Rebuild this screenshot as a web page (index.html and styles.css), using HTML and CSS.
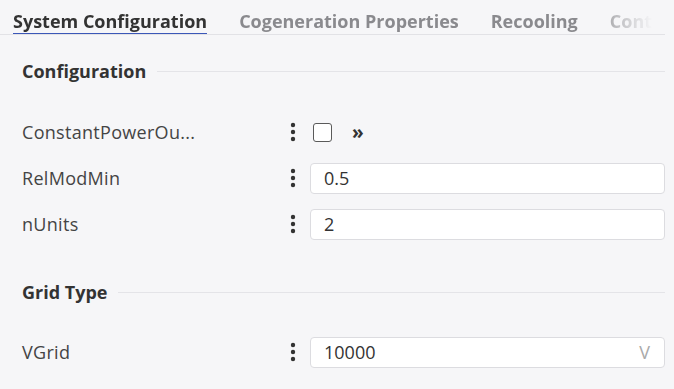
FILE: index.html
```html
<!DOCTYPE html>
<html lang="en">
<head>
  <meta charset="UTF-8">
  <meta name="viewport" content="width=device-width, initial-scale=1.0">
  <title>Properties</title>
  <link rel="stylesheet" href="styles.css">
</head>
<body>
  <div class="tabs">
    <div class="tab-list">
      <div class="tab active">System Configuration</div>
      <div class="tab">Cogeneration Properties</div>
      <div class="tab">Recooling</div>
      <div class="tab">Control</div>
    </div>
  </div>

  <div class="section">
    <div class="section-title"><span>Configuration</span></div>
    <div class="row">
      <div class="label">ConstantPowerOu...</div>
      <svg class="kebab" width="6" height="20" viewBox="0 0 6 20"><circle cx="3" cy="3" r="2.2"/><circle cx="3" cy="10" r="2.2"/><circle cx="3" cy="17" r="2.2"/></svg>
      <div class="control">
        <span class="checkbox"></span>
        <span class="more">&raquo;</span>
      </div>
    </div>
    <div class="row">
      <div class="label">RelModMin</div>
      <svg class="kebab" width="6" height="20" viewBox="0 0 6 20"><circle cx="3" cy="3" r="2.2"/><circle cx="3" cy="10" r="2.2"/><circle cx="3" cy="17" r="2.2"/></svg>
      <div class="control"><div class="input">0.5</div></div>
    </div>
    <div class="row">
      <div class="label">nUnits</div>
      <svg class="kebab" width="6" height="20" viewBox="0 0 6 20"><circle cx="3" cy="3" r="2.2"/><circle cx="3" cy="10" r="2.2"/><circle cx="3" cy="17" r="2.2"/></svg>
      <div class="control"><div class="input">2</div></div>
    </div>
  </div>

  <div class="section">
    <div class="section-title"><span>Grid Type</span></div>
    <div class="row">
      <div class="label">VGrid</div>
      <svg class="kebab" width="6" height="20" viewBox="0 0 6 20"><circle cx="3" cy="3" r="2.2"/><circle cx="3" cy="10" r="2.2"/><circle cx="3" cy="17" r="2.2"/></svg>
      <div class="control"><div class="input"><span>10000</span><span class="unit">V</span></div></div>
    </div>
  </div>
</body>
</html>
```

FILE: styles.css
```css
body {
  margin: 0;
  font-family: "Open Sans", "Noto Sans", sans-serif;
  background: #f6f6f8;
  color: #3a3a3a;
  width: 674px;
  height: 389px;
  overflow: hidden;
}
.tabs {
  width: 665px;
  height: 34px;
  border-bottom: 1px solid #e2e2e6;
  overflow: hidden;
}
.tab-list {
  display: flex;
  gap: 32px;
  padding-left: 13px;
  white-space: nowrap;
  -webkit-mask-image: linear-gradient(to right, #000 596px, rgba(0,0,0,0.55) 615px, transparent 652px);
  mask-image: linear-gradient(to right, #000 596px, rgba(0,0,0,0.55) 615px, transparent 652px);
}
.tab {
  font-size: 18px;
  font-weight: 700;
  color: #8a8a8e;
  height: 33px;
  line-height: 42px;
  box-sizing: border-box;
}
.tab.active {
  color: #333;
  border-bottom: 3px solid #3b57b8;
  height: 36px;
}
.section {
  padding: 24px 9px 0 22px;
}
.section + .section {
  padding-top: 33px;
}
.section-title {
  display: flex;
  align-items: center;
  gap: 11px;
  height: 24px;
  margin-bottom: 26px;
  font-size: 18px;
  font-weight: 700;
  color: #333;
}
.section + .section .section-title {
  margin-bottom: 25px;
}
.section-title::after {
  content: "";
  flex: 1;
  height: 1px;
  background: #e4e4e8;
}
.row {
  display: flex;
  align-items: center;
  height: 46px;
}
.label {
  width: 268px;
  font-size: 18px;
  color: #444;
  letter-spacing: 0.3px;
}
.kebab {
  fill: #333;
  margin-right: 14px;
  flex: none;
}
.control {
  flex: 1;
  display: flex;
  align-items: center;
}
.checkbox {
  width: 19px;
  height: 19px;
  box-sizing: border-box;
  border: 1.5px solid #5a5a5a;
  border-radius: 3px;
  background: #fff;
  margin-left: 3px;
}
.more {
  margin-left: 20px;
  font-size: 19px;
  font-weight: 700;
  color: #333;
  line-height: 1;
}
.input {
  flex: 1;
  display: flex;
  justify-content: space-between;
  align-items: center;
  height: 31px;
  box-sizing: border-box;
  padding: 0 14px 0 13px;
  background: #fff;
  border: 1px solid #dcdce0;
  border-radius: 4px;
  font-size: 18px;
  color: #333;
}
.unit {
  color: #aaa;
}
```
